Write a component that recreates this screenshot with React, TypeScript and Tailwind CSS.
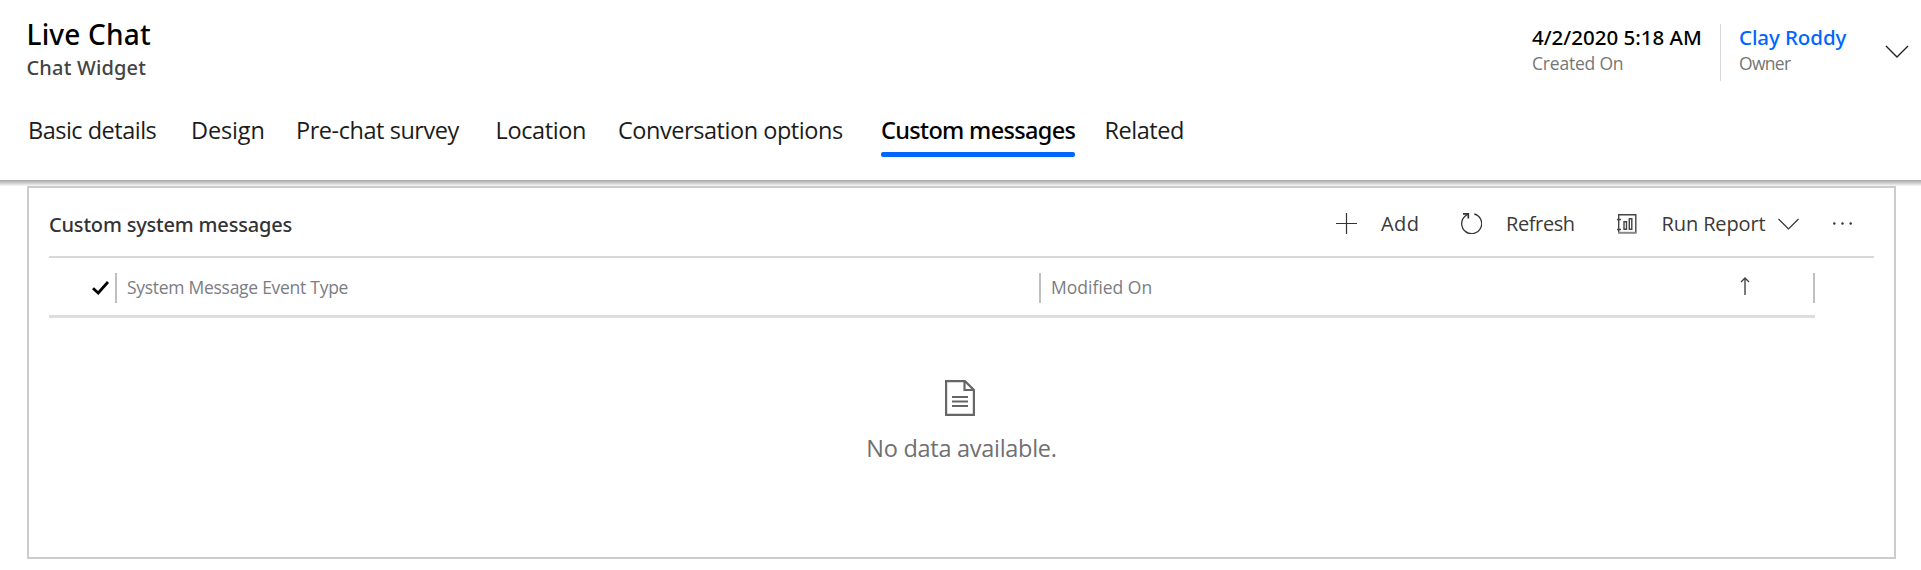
import React from "react";

const tabs = [
  { label: "Basic details", style: "tracking-[-0.5px]" },
  { label: "Design", style: "tracking-[-0.13px]" },
  { label: "Pre-chat survey", style: "tracking-[-0.45px]" },
  { label: "Location", style: "tracking-[-0.38px]" },
  { label: "Conversation options", style: "tracking-[-0.45px]" },
  { label: "Custom messages", style: "tracking-[-0.67px]", active: true },
  { label: "Related", style: "tracking-[-0.46px]" },
];

function Header() {
  return (
    <header className="h-[180px] bg-white">
      <div className="flex h-[114px] justify-between">
        <div className="pl-[26.5px] pt-4 font-['Noto_Sans',sans-serif] font-medium">
          <h1 className="text-[28px] leading-9 tracking-[0.18px] text-black">Live Chat</h1>
          <p className="mt-0.5 text-[20px] leading-7 tracking-[0.17px] text-[#444]">Chat Widget</p>
        </div>
        <div className="flex pr-3 pt-[23px]">
          <div className="w-[188px]">
            <div className="font-['Noto_Sans',sans-serif] text-[20.5px] font-medium leading-7 text-black">4/2/2020 5:18 AM</div>
            <div className="text-[17.5px] leading-6 tracking-[-0.2px] text-[#767676]">Created On</div>
          </div>
          <div className="mt-px h-[57px] w-px bg-[#d8d8d8]" />
          <div className="ml-[18px] w-[146px]">
            <div className="font-['Noto_Sans',sans-serif] text-[20.5px] font-medium leading-7 tracking-[-0.09px] text-[#0066ff]">Clay Roddy</div>
            <div className="text-[17.5px] leading-6 tracking-[-0.7px] text-[#767676]">Owner</div>
          </div>
          <svg className="mt-[22px] h-[14px] w-6" viewBox="0 0 24 14" fill="none" stroke="#222" strokeWidth="1.4">
            <path d="M1 1 L12 12 L23 1" />
          </svg>
        </div>
      </div>
      <nav className="grid grid-cols-[163px_105px_199.5px_122.5px_263px_223.5px_auto] justify-start pl-[28px] text-[23.5px] leading-8 text-[#1c1c1c]">
        {tabs.map((t) => (
          <div key={t.label} className="whitespace-nowrap">
            {t.active ? (
              <div className="w-[194px]">
                <div className={`font-['Noto_Sans',sans-serif] font-medium text-black ${t.style}`}>{t.label}</div>
                <div className="mt-1.5 h-[5px] rounded-[2px] bg-[#0066ff]" />
              </div>
            ) : (
              <span className={t.style}>{t.label}</span>
            )}
          </div>
        ))}
      </nav>
    </header>
  );
}

function Toolbar() {
  return (
    <div className="grid grid-cols-[45px_80px_45px_111px_44.5px_116.5px_55px_19px] items-center whitespace-nowrap pr-[22px] text-[20px] leading-7 text-[#3a3a3a]">
      <svg className="h-[21px] w-[21px]" viewBox="0 0 21 21" stroke="#333" strokeWidth="1.2">
        <path d="M0 10.5H21M10.5 0V21" />
      </svg>
      <span className="tracking-[0.4px]">Add</span>
      <svg className="h-[21px] w-[21px]" viewBox="0 0 21 21" fill="none" stroke="#333" strokeWidth="1.3">
        <path d="M13.3 1 A10 10 0 1 1 4 3.2 L7 1" />
        <path d="M2 0.9 H7.3 V5.5" strokeWidth="1.7" />
      </svg>
      <span className="tracking-[-0.4px]">Refresh</span>
      <svg className="h-5 w-5" viewBox="0 0 20 20" fill="none" stroke="#444" strokeWidth="1.4">
        <path d="M1.7 19 V0.7 H18.8 V19" />
        <path d="M1 18.8 H19.5" stroke="#888" strokeWidth="2" />
        <path d="M0 5.5 H4 M0 15.5 H4" />
        <path d="M7 7.7 H9.5 V15.3 H7 Z M12.3 4.7 H14.8 V15.3 H12.3 Z" />
      </svg>
      <span className="tracking-[-0.11px]">Run Report</span>
      <svg className="h-3 w-[21px]" viewBox="0 0 21 12" fill="none" stroke="#333" strokeWidth="1.2">
        <path d="M0.5 1 L10.5 11 L20.5 1" />
      </svg>
      <svg className="h-[3px] w-[19px]" viewBox="0 0 19 3" fill="#333">
        <circle cx="1.3" cy="1.5" r="1.2" />
        <circle cx="9.5" cy="1.5" r="1.2" />
        <circle cx="17.7" cy="1.5" r="1.2" />
      </svg>
    </div>
  );
}

export default function App() {
  return (
    <div className="h-[570px] w-full overflow-hidden bg-white font-['Open_Sans',sans-serif] font-normal">
      <Header />
      <div className="h-1.5 bg-linear-to-b from-[#a6a6a6] to-[#f8f8f8]" />
      <section className="ml-[27px] h-[373px] w-[1869px] border-2 border-[#ccc] px-5">
        <div className="flex h-[70px] items-center justify-between border-b-2 border-[#d8d8d8] pt-[3px]">
          <h2 className="pt-[3px] font-['Noto_Sans',sans-serif] text-[20px] font-medium leading-7 tracking-[-0.19px] text-[#333]">Custom system messages</h2>
          <Toolbar />
        </div>
        <div className="flex h-[60px] w-[1766px] items-start border-b-[3px] border-[#ddd] pt-[15px] text-[17.5px] leading-7 text-[#7c7c84]">
          <div className="flex h-[30px] w-[68px] items-center justify-end border-r-2 border-[#bfbfbf] pr-[6px]">
            <svg className="h-[14px] w-[17px]" viewBox="0 0 17 14" fill="none" stroke="#000" strokeWidth="2.8">
              <path d="M1 7.2 L6.2 12 L16 1" />
            </svg>
          </div>
          <div className="h-[30px] w-[924px] border-r-2 border-[#bfbfbf] pl-[10px] tracking-[-0.28px]">System Message Event Type</div>
          <div className="flex h-[30px] w-[774px] justify-between border-r-2 border-[#bfbfbf] pl-[10px] pr-[63px]">
            <span>Modified On</span>
            <svg className="mt-1 h-[19px] w-[10px]" viewBox="0 0 10 19" fill="none" stroke="#444" strokeWidth="1.4">
              <path d="M5 1 V18 M1 5 L5 1 L9 5" />
            </svg>
          </div>
        </div>
        <div className="flex flex-col items-center pt-[62px]">
          <svg className="mr-[3px] h-9 w-[30px]" viewBox="0 0 30 36" fill="none" stroke="#666" strokeWidth="2.2">
            <path d="M1.1 1.1 H20 L28.9 10 V34.9 H1.1 Z" />
            <path d="M19.5 1 V10 H29" />
            <path d="M7 17 H23 M7 21.5 H23 M7 26 H23" />
          </svg>
          <p className="mt-4 text-[23.5px] leading-8 tracking-[-0.28px] text-[#707070]">No data available.</p>
        </div>
      </section>
    </div>
  );
}
